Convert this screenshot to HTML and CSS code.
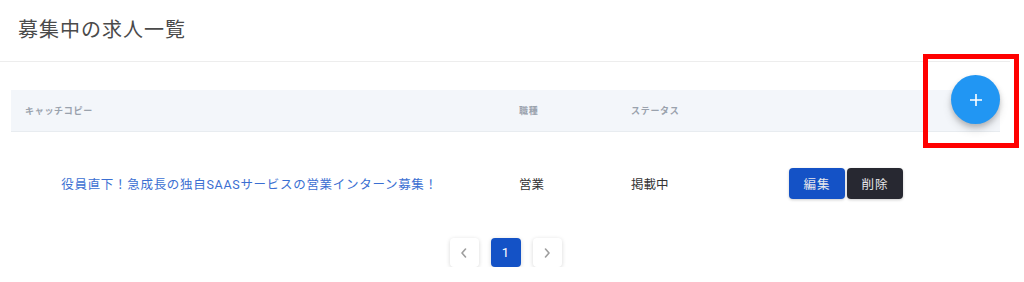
FILE: index.html
```html
<!DOCTYPE html>
<html lang="ja">
<head>
    <meta charset="UTF-8">
    <meta name="viewport" content="width=device-width, initial-scale=1.0">
    <title>募集中の求人一覧</title>
    <link rel="stylesheet" href="styles.css">
</head>
<body>
    <div class="page">
        <!-- Header -->
        <header class="page-header">
            <h1>募集中の求人一覧</h1>
        </header>

        <!-- Job list -->
        <section class="job-list">
            <table class="job-table">
                <colgroup>
                    <col class="col-catch">
                    <col class="col-type">
                    <col class="col-status">
                    <col>
                </colgroup>
                <thead>
                    <tr>
                        <th class="th-catch">キャッチコピー</th>
                        <th>職種</th>
                        <th>ステータス</th>
                        <th></th>
                    </tr>
                </thead>
                <tbody>
                    <tr>
                        <td class="td-catch"><a href="#">役員直下！急成長の独自SAASサービスの営業インターン募集！</a></td>
                        <td>営業</td>
                        <td>掲載中</td>
                        <td class="actions">
                            <button class="btn btn-edit">編集</button>
                            <button class="btn btn-delete">削除</button>
                        </td>
                    </tr>
                </tbody>
            </table>

            <nav class="pager">
                <button class="page-btn" aria-label="前へ">
                    <svg width="10" height="12" viewBox="0 0 10 12"><path d="M6.5 2 L3 6 L6.5 10" fill="none" stroke="#9e9e9e" stroke-width="1.6" stroke-linecap="round" stroke-linejoin="round"/></svg>
                </button>
                <button class="page-btn current">1</button>
                <button class="page-btn" aria-label="次へ">
                    <svg width="10" height="12" viewBox="0 0 10 12"><path d="M3.5 2 L7 6 L3.5 10" fill="none" stroke="#9e9e9e" stroke-width="1.6" stroke-linecap="round" stroke-linejoin="round"/></svg>
                </button>
            </nav>
        </section>

        <!-- Floating add button -->
        <button class="fab" aria-label="追加">
            <svg width="14" height="14" viewBox="0 0 14 14"><path d="M7 1 V13 M1 7 H13" stroke="#fff" stroke-width="1.6"/></svg>
        </button>
        <div class="highlight"></div>
    </div>
</body>
</html>
```

FILE: styles.css
```css
* {
    box-sizing: border-box;
    margin: 0;
    padding: 0;
}
body {
    font-family: Roboto, "Noto Sans CJK JP", sans-serif;
    background: #fff;
    color: #333;
    overflow: hidden;
}
.page {
    position: relative;
    width: 1010px;
}

/* Header */
.page-header {
    padding: 14px 18px 15px;
    border-bottom: 1px solid #ededed;
}
.page-header h1 {
    font-size: 20px;
    line-height: 32px;
    font-weight: 400;
    letter-spacing: 1px;
    color: #4a4a4a;
}

/* Table */
.job-list {
    margin: 28px 10px 0 11px;
}
.job-table {
    width: 989px;
    table-layout: fixed;
    border-collapse: collapse;
}
.col-catch { width: 477px; }
.col-type { width: 112px; }
.col-status { width: 158px; }
.job-table th {
    height: 41px;
    background: #f3f6fa;
    border-bottom: 1px solid #e8ecf0;
    text-align: left;
    padding-left: 31px;
    font-size: 9px;
    font-weight: 700;
    letter-spacing: 0.7px;
    color: #9aa2ad;
}
.job-table th.th-catch {
    padding-left: 14px;
}
.job-table td {
    height: 104px;
    padding-left: 31px;
    font-size: 12.5px;
    color: #333;
}
.job-table td.td-catch {
    padding-left: 0;
    text-align: center;
}
.td-catch a {
    color: #3b6fd2;
    text-decoration: none;
    letter-spacing: 0.7px;
}
.actions {
    white-space: nowrap;
}
.btn {
    width: 56px;
    height: 31px;
    border: none;
    border-radius: 4px;
    font-family: inherit;
    font-size: 12.5px;
    letter-spacing: 1px;
    color: #e8e8ec;
    cursor: pointer;
    box-shadow: 0 1px 3px rgba(0, 0, 0, 0.2);
}
.btn + .btn {
    margin-left: -1px;
}
.btn-edit {
    background: #1452c6;
}
.btn-delete {
    background: #272831;
}

/* Pagination */
.pager {
    margin-top: 3px;
    display: flex;
    justify-content: center;
    gap: 12px;
}
.page-btn {
    width: 29px;
    height: 29px;
    border: none;
    border-radius: 4px;
    background: #fff;
    box-shadow: 0 1px 4px rgba(0, 0, 0, 0.16);
    display: flex;
    align-items: center;
    justify-content: center;
    font-family: inherit;
    font-size: 13px;
    cursor: pointer;
}
.page-btn.current {
    width: 30px;
    background: #1452c6;
    color: #fff;
}

/* Floating button + annotation */
.fab {
    position: absolute;
    left: 951px;
    top: 75px;
    width: 49px;
    height: 49px;
    border: none;
    border-radius: 50%;
    background: #2196f3;
    box-shadow: 0 3px 5px rgba(0, 0, 0, 0.18), 0 6px 10px rgba(0, 0, 0, 0.12);
    display: flex;
    align-items: center;
    justify-content: center;
    cursor: pointer;
}
.highlight {
    position: absolute;
    left: 923px;
    top: 54px;
    width: 96px;
    height: 94px;
    border: 5px solid #ff0000;
    pointer-events: none;
}
```
